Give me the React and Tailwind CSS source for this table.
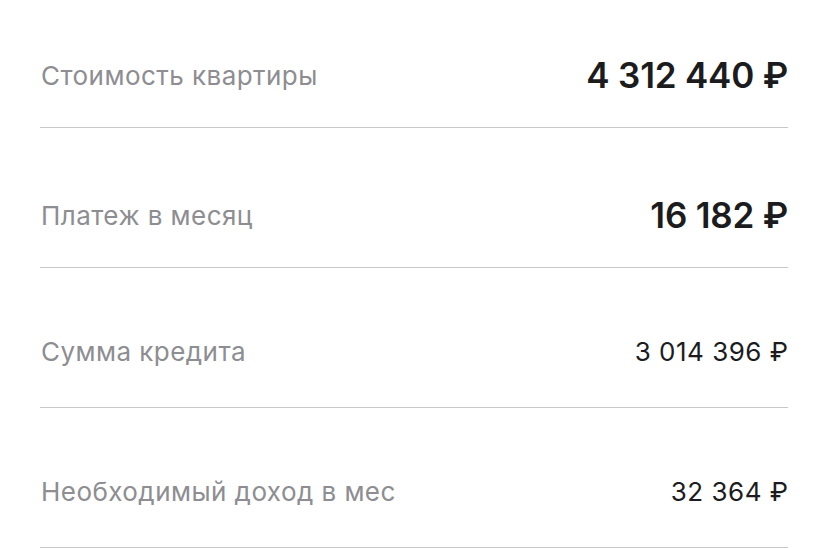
export default function App() {
  const rows = [
    { label: "Стоимость квартиры", value: "4 312 440 ₽", bold: true, h: "h-[128px]", pt: "pt-[23px]" },
    { label: "Платеж в месяц", value: "16 182 ₽", bold: true, h: "h-[140px]", pt: "pt-[35px]" },
    { label: "Сумма кредита", value: "3 014 396 ₽", bold: false, h: "h-[140px]", pt: "pt-[27px]" },
    { label: "Необходимый доход в мес", value: "32 364 ₽", bold: false, h: "h-[140px]", pt: "pt-[27px]" },
  ];
  return (
    <div className="w-[828px] h-[548px] bg-white overflow-hidden px-[40px] font-['Inter',sans-serif]">
      {rows.map((r) => (
        <div key={r.label} className={`${r.h} ${r.pt} flex items-center justify-between border-b border-[#c8c8cb]`}>
          <span className="text-[26px] text-[#8d8d92] tracking-[0.45px] ml-[1px]">{r.label}</span>
          <span className={r.bold ? "text-[35px] font-semibold text-[#1c1c1e] tracking-[-0.2px]" : "text-[26px] text-[#1c1c1e] tracking-[0.5px] mr-[-0.5px]"}>{r.value}</span>
        </div>
      ))}
    </div>
  );
}
